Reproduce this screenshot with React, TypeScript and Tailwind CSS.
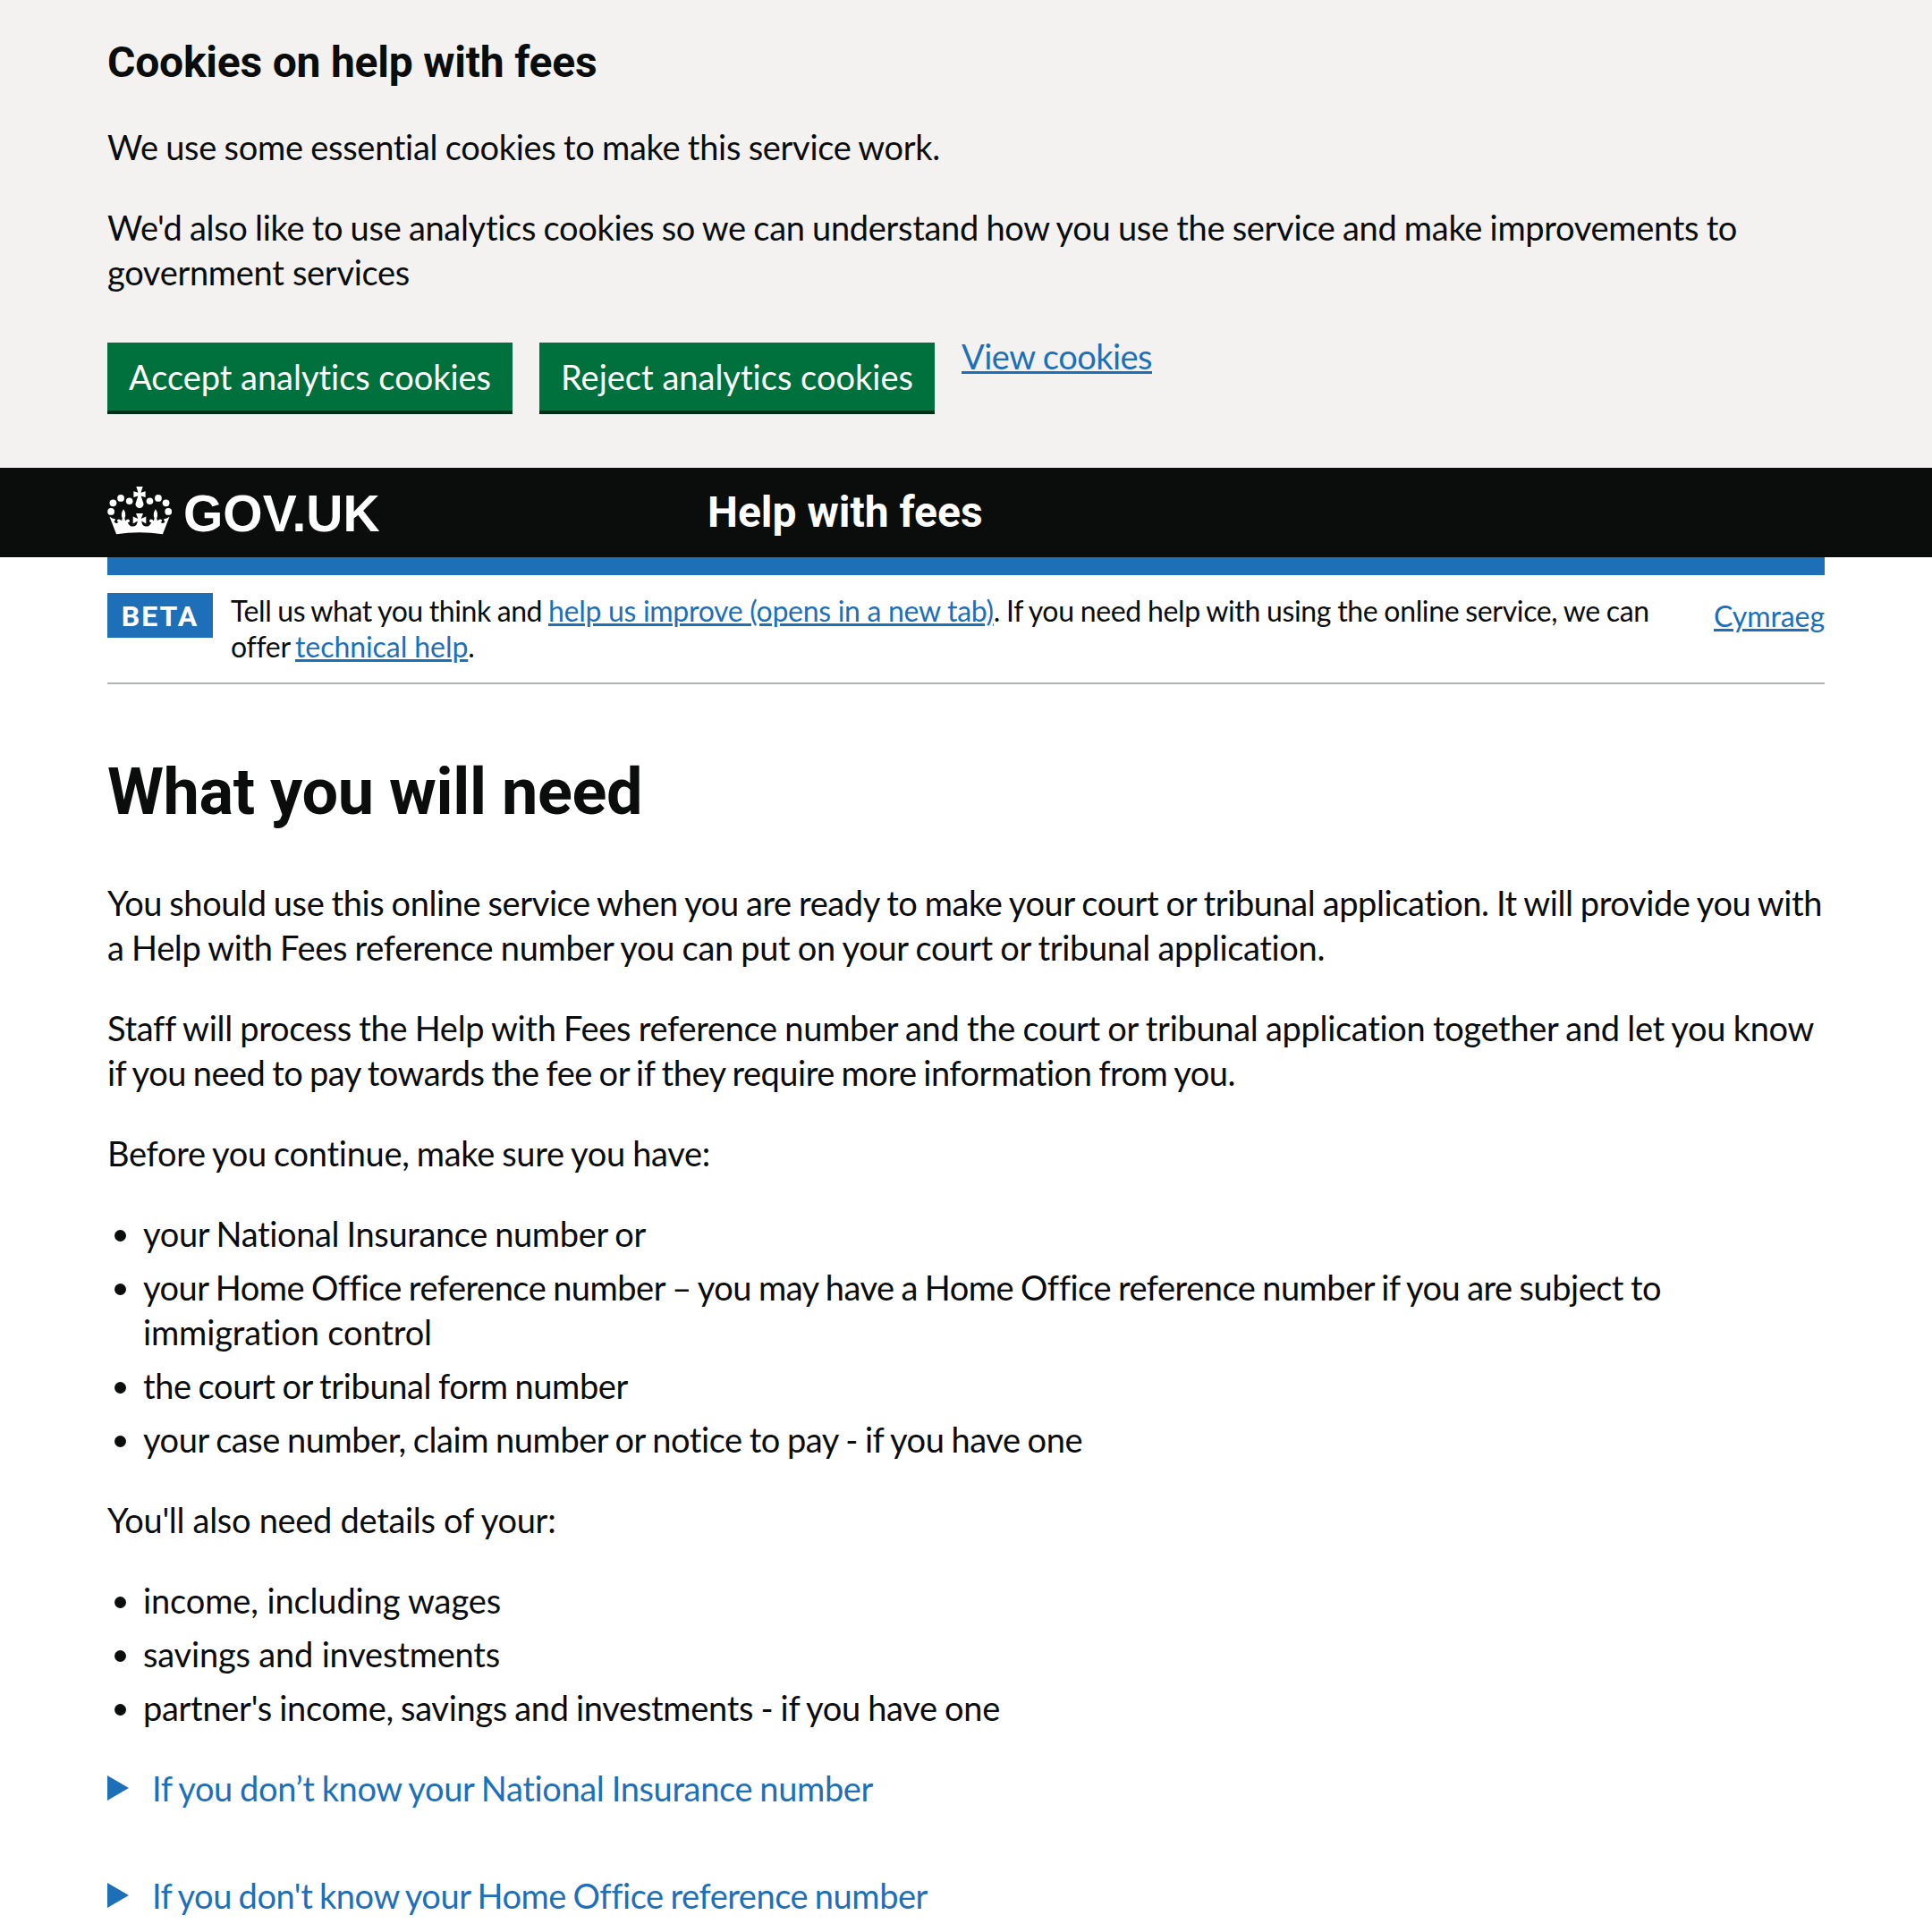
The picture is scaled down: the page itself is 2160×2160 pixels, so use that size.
import React from "react";

type TextProps = { className: string; children: React.ReactNode };

function Line({ className, children }: TextProps) {
  return <span className={`inline-block whitespace-pre ${className}`}>{children}</span>;
}

function Link({ className, children }: TextProps) {
  return (
    <a
      href="#"
      className={`inline-block whitespace-pre text-[#1d70b8] underline decoration-[3px] underline-offset-[2px] ${className}`}
    >
      {children}
    </a>
  );
}

function Crown() {
  return (
    <svg viewBox="12 12 216 161" className="h-[53.5px] w-[72px] shrink-0 fill-white" aria-hidden="true">
      <circle cx="24" cy="96" r="11.7" />
      <circle cx="31" cy="67" r="11.7" />
      <circle cx="57" cy="51" r="11.7" />
      <circle cx="86" cy="61" r="11.4" />
      <circle cx="154.500" cy="61" r="11.4" />
      <circle cx="183" cy="51" r="11.7" />
      <circle cx="209" cy="67" r="11.7" />
      <circle cx="217" cy="96" r="11.7" />
      <path d="M109 12H131L124.500 32L140 28V48L125 43.500L132 65A13.500 13.500 0 1 1 108 65L115 43.500L100 48V28L115.500 32Z" />
      <path d="M42 172Q120 160 198 172L221 113Q212 121 202 121Q201 127 206 131Q198 140 189 131Q197 133 195 124Q188 119 180 127L178 118Q185 104 174 88Q163 104 170 118L168 127Q160 119 154 124Q151 134 160 132Q153 148 141 146Q128 146 127 128L142 137V113L125 120L132 102H108L115 120L98 113V137L113 128Q112 146 99 146Q87 148 80 132Q89 134 86 124Q80 119 72 127L70 118Q77 104 66 88Q55 104 62 118L60 127Q52 119 45 124Q43 133 51 131Q42 140 34 131Q39 127 38 121Q28 121 19 113Z" />
    </svg>
  );
}

function CookieBanner() {
  return (
    <section className="h-[523px] bg-[#f3f2f1] px-[120px] pt-10">
      <h2 className="h-[60px] font-['Roboto',sans-serif] text-5xl leading-[60px] font-bold tracking-[-0.22px] whitespace-pre">
        Cookies on help with fees
      </h2>
      <p className="mt-[39px] flex">
        <Line className="tracking-[-0.3px] [word-spacing:-0.86px]">We use some essential cookies to make this service work.</Line>
      </p>
      <p className="mt-10 flex flex-col items-start">
        <Line className="tracking-[-0.3px] [word-spacing:-0.97px]">
          We'd also like to use analytics cookies so we can understand how you use the service and make improvements to
        </Line>
        <Line className="tracking-[-0.3px]">government services</Line>
      </p>
      <div className="mt-[54px] flex items-start">
        <button className="h-20 w-[453px] border-b-4 border-[#002d18] bg-[#00703c] text-white">
          <Line className="tracking-[-0.03px]">Accept analytics cookies</Line>
        </button>
        <button className="ml-[30px] h-20 w-[442px] border-b-4 border-[#002d18] bg-[#00703c] text-white">
          <Line className="tracking-[0.01px]">Reject analytics cookies</Line>
        </button>
        <Link className="-mt-2.5 ml-[30px] tracking-[-0.53px]">View cookies</Link>
      </div>
    </section>
  );
}

function Header() {
  return (
    <header className="flex h-[100px] bg-[#0b0c0c] px-[120px] text-white">
      <a href="#" className="flex w-[671px] items-start pt-[21px]">
        <Crown />
        <span className="ml-[13px] font-['Liberation_Sans',sans-serif] text-[57px] leading-[60px] font-bold">GOV.UK</span>
      </a>
      <a href="#" className="pt-5 font-['Roboto',sans-serif] text-5xl leading-[60px] font-bold">
        Help with fees
      </a>
    </header>
  );
}

function PhaseBanner() {
  return (
    <div className="flex h-[122px] items-start border-b-2 border-[#b1b4b6] pt-5 text-[32px] leading-10">
      <strong className="flex h-[50px] w-[118px] items-center justify-center bg-[#1d70b8] pt-0.5 font-['Roboto',sans-serif] tracking-[2px] text-white">
        BETA
      </strong>
      <div className="ml-5 flex grow flex-col">
        <div className="flex">
          <Line className="tracking-[-0.4px] [word-spacing:-0.93px]">{"Tell us what you think and "}</Line>
          <Link className="tracking-[-0.3px]">help us improve (opens in a new tab)</Link>
          <Line className="tracking-[-0.35px] [word-spacing:-0.79px]">. If you need help with using the online service, we can</Line>
        </div>
        <div className="flex">
          <Line className="tracking-[-0.3px] [word-spacing:-1.97px]">{"offer "}</Line>
          <Link className="tracking-[-0.06px]">technical help</Link>
          <span>.</span>
        </div>
      </div>
      <Link className="mt-1.5 tracking-[-0.07px]">Cymraeg</Link>
    </div>
  );
}

function Bullet({ children }: { children: React.ReactNode }) {
  return (
    <li className="flex">
      <span className="mt-[21px] mr-[19px] ml-2 size-[13px] shrink-0 rounded-full bg-[#0b0c0c]" />
      <div className="flex flex-col items-start">{children}</div>
    </li>
  );
}

function Details({ children }: { children: React.ReactNode }) {
  return (
    <div className="flex h-[50px] text-[#1d70b8]">
      <svg viewBox="0 0 24 28" className="mt-[11px] mr-[26px] h-7 w-6 fill-[#1d70b8]" aria-hidden="true">
        <path d="M0 0L24 14L0 28Z" />
      </svg>
      {children}
    </div>
  );
}

export default function App() {
  return (
    <div className="h-[2160px] overflow-hidden bg-white font-['Lato',sans-serif] text-[38px] leading-[50px] text-[#0b0c0c]">
      <CookieBanner />
      <Header />
      <div className="px-[120px]">
        <div className="h-5 bg-[#1d70b8]" />
        <PhaseBanner />
        <main className="pt-[81px]">
          <h1 className="h-20 font-['Roboto',sans-serif] text-7xl leading-[80px] font-bold tracking-[-0.4px]">What you will need</h1>
          <div className="mt-[58px] flex flex-col gap-10">
            <p className="flex flex-col items-start">
              <Line className="tracking-[-0.4px] [word-spacing:-1.09px]">
                You should use this online service when you are ready to make your court or tribunal application. It will provide you with
              </Line>
              <Line className="tracking-[-0.35px] [word-spacing:-0.86px]">
                a Help with Fees reference number you can put on your court or tribunal application.
              </Line>
            </p>
            <p className="flex flex-col items-start">
              <Line className="tracking-[-0.3px] [word-spacing:-0.97px]">
                Staff will process the Help with Fees reference number and the court or tribunal application together and let you know
              </Line>
              <Line className="tracking-[-0.5px] [word-spacing:-1.4px]">
                if you need to pay towards the fee or if they require more information from you.
              </Line>
            </p>
            <p className="flex">
              <Line className="tracking-[-0.3px] [word-spacing:-1.2px]">Before you continue, make sure you have:</Line>
            </p>
            <ul className="flex flex-col gap-2.5">
              <Bullet>
                <Line className="tracking-[-0.35px] [word-spacing:-1.19px]">your National Insurance number or</Line>
              </Bullet>
              <Bullet>
                <Line className="tracking-[-0.5px] [word-spacing:-1.28px]">
                  your Home Office reference number – you may have a Home Office reference number if you are subject to
                </Line>
                <Line className="tracking-[-0.13px]">immigration control</Line>
              </Bullet>
              <Bullet>
                <Line className="tracking-[-0.4px] [word-spacing:-1.44px]">the court or tribunal form number</Line>
              </Bullet>
              <Bullet>
                <Line className="tracking-[-0.45px] [word-spacing:-1.17px]">
                  your case number, claim number or notice to pay - if you have one
                </Line>
              </Bullet>
            </ul>
            <p className="flex">
              <Line className="tracking-[-0.3px]">You'll also need details of your:</Line>
            </p>
            <ul className="flex flex-col gap-2.5">
              <Bullet>
                <Line className="tracking-[-0.12px]">income, including wages</Line>
              </Bullet>
              <Bullet>
                <Line className="tracking-[-0.19px]">savings and investments</Line>
              </Bullet>
              <Bullet>
                <Line className="tracking-[-0.3px] [word-spacing:-1.15px]">
                  partner's income, savings and investments - if you have one
                </Line>
              </Bullet>
            </ul>
            <Details>
              <Line className="tracking-[-0.35px] [word-spacing:-1.23px]">If you don’t know your National Insurance number</Line>
            </Details>
            <div className="pt-[30px]">
              <Details>
                <Line className="tracking-[-0.45px] [word-spacing:-1.63px]">If you don't know your Home Office reference number</Line>
              </Details>
            </div>
          </div>
        </main>
      </div>
    </div>
  );
}
